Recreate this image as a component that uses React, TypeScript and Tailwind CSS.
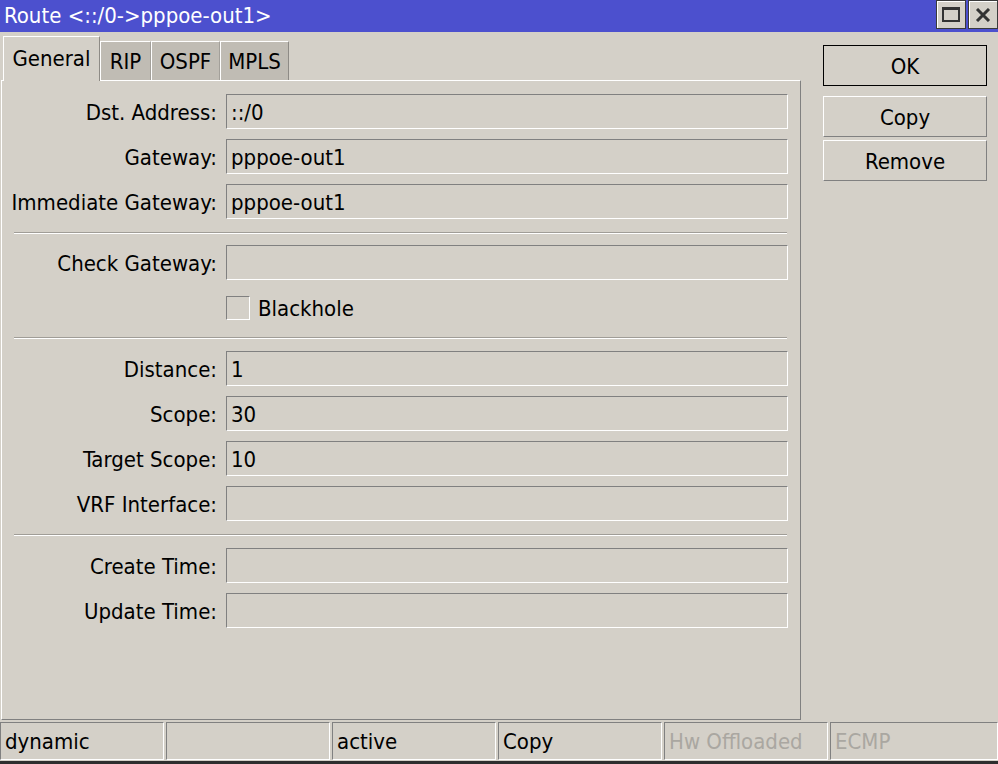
import React from "react";

const Field = ({ label, value, className = "" }: { label: string; value?: string; className?: string }) => (
  <div className={`flex items-center ${className}`}>
    <div className="w-[215px] text-right whitespace-nowrap leading-none pt-[3px]">{label}</div>
    <div className="ml-[9px] w-[562px] h-[35px] border-t border-l border-t-[#808080] border-l-[#808080] border-b border-r border-b-white border-r-white flex items-center pl-[4px] pt-[3px] leading-none">
      {value}
    </div>
  </div>
);

const Sep = ({ className = "" }: { className?: string }) => (
  <div className={`ml-[12px] w-[773px] h-[2px] border-t border-t-[#a09d97] border-b border-b-white ${className}`} />
);

const Cell = ({ text, disabled = false, grow = false }: { text: string; disabled?: boolean; grow?: boolean }) => (
  <div
    className={`${grow ? "flex-1" : "w-[164px]"} h-[38px] border-t border-l border-t-[#808080] border-l-[#808080] border-b border-r border-b-white border-r-white flex items-center pl-[4px] pt-[2px] leading-none whitespace-nowrap ${
      disabled ? "text-[#aaa7a1]" : "text-black"
    }`}
  >
    {text}
  </div>
);

export default function App() {
  return (
    <div className="w-[998px] h-[764px] bg-[#d4d0c8] flex flex-col overflow-hidden font-['DejaVu_Sans_Condensed','DejaVu_Sans',sans-serif] text-[22px] text-black">
      {/* Title bar */}
      <div className="h-[32px] bg-[#4c50ce] flex items-start shrink-0">
        <div className="pl-[4px] pt-[5px] text-white leading-none whitespace-nowrap">Route &lt;::/0-&gt;pppoe-out1&gt;</div>
        <div className="ml-auto flex gap-[2px]">
          <div className="w-[30px] h-[29px] bg-[#d4d0c8] border border-[#3a3a3a] shadow-[inset_1px_1px_0_#ffffff] flex items-center justify-center">
            <div className="w-[18px] h-[15px] border-[#333333] border-t-[3px] border-l-2 border-r-2 border-b-2" />
          </div>
          <div className="w-[30px] h-[29px] bg-[#d4d0c8] border border-[#3a3a3a] shadow-[inset_1px_1px_0_#ffffff] flex items-center justify-center">
            <svg width="16" height="14" viewBox="0 0 16 14">
              <path d="M2 1 L14 13 M14 1 L2 13" stroke="#333333" strokeWidth="3" fill="none" />
            </svg>
          </div>
        </div>
      </div>

      {/* Main */}
      <div className="flex flex-1 min-h-0">
        <div className="flex flex-col w-[801px] pl-[1px]">
          {/* Tabs */}
          <div className="h-[48px] flex items-end pl-[2px] shrink-0">
            <div className="relative z-10 -mb-[1px] w-[97px] h-[45px] bg-[#d4d0c8] border-t border-l border-t-white border-l-white border-r border-r-[#8e8b86] flex items-center justify-center leading-none">
              General
            </div>
            <div className="w-[51px] h-[39px] bg-[#c0bcb4] border-t border-l border-t-white border-l-white border-r border-r-[#a3a09a] flex items-center justify-center leading-none pt-[2px]">
              RIP
            </div>
            <div className="w-[69px] h-[39px] bg-[#c0bcb4] border-t border-l border-t-white border-l-white border-r border-r-[#a3a09a] flex items-center justify-center leading-none pt-[2px]">
              OSPF
            </div>
            <div className="w-[69px] h-[39px] bg-[#c0bcb4] border-t border-l border-t-white border-l-white border-r border-r-[#8e8b86] flex items-center justify-center leading-none pt-[2px]">
              MPLS
            </div>
          </div>
          {/* Panel */}
          <div className="flex-1 border-t border-l border-t-white border-l-white border-r border-b border-r-[#808080] border-b-[#808080] pt-[13px] flex flex-col">
            <Field label="Dst. Address:" value="::/0" />
            <Field label="Gateway:" value="pppoe-out1" className="mt-[10px]" />
            <Field label="Immediate Gateway:" value="pppoe-out1" className="mt-[10px]" />
            <Sep className="mt-[13px]" />
            <Field label="Check Gateway:" className="mt-[11px]" />
            <div className="flex items-center mt-[16px] ml-[224px]">
              <div className="w-[24px] h-[24px] border-t border-l border-t-[#808080] border-l-[#808080] border-b border-r border-b-white border-r-white" />
              <div className="ml-[8px] leading-none pt-[2px]">Blackhole</div>
            </div>
            <Sep className="mt-[17px]" />
            <Field label="Distance:" value="1" className="mt-[12px]" />
            <Field label="Scope:" value="30" className="mt-[10px]" />
            <Field label="Target Scope:" value="10" className="mt-[10px]" />
            <Field label="VRF Interface:" className="mt-[10px]" />
            <Sep className="mt-[13px]" />
            <Field label="Create Time:" className="mt-[12px]" />
            <Field label="Update Time:" className="mt-[10px]" />
          </div>
        </div>

        {/* Buttons */}
        <div className="pl-[22px] pt-[13px] flex flex-col">
          <div className="w-[164px] h-[41px] border border-black flex items-center justify-center leading-none pt-[3px]">OK</div>
          <div className="mt-[10px] w-[164px] h-[41px] border-t border-l border-t-white border-l-white border-b border-r border-b-[#808080] border-r-[#808080] flex items-center justify-center leading-none pt-[3px]">
            Copy
          </div>
          <div className="mt-[3px] w-[164px] h-[41px] border-t border-l border-t-white border-l-white border-b border-r border-b-[#808080] border-r-[#808080] flex items-center justify-center leading-none pt-[3px]">
            Remove
          </div>
        </div>
      </div>

      {/* Status bar */}
      <div className="h-[44px] shrink-0 flex flex-col">
        <div className="pt-[2px] flex gap-[2px]">
          <Cell text="dynamic" />
          <Cell text="" />
          <Cell text="active" />
          <Cell text="Copy" />
          <Cell text="Hw Offloaded" disabled />
          <Cell text="ECMP" disabled grow />
        </div>
        <div className="mt-[1px] h-[3px] bg-[#2e2e2e]" />
      </div>
    </div>
  );
}
